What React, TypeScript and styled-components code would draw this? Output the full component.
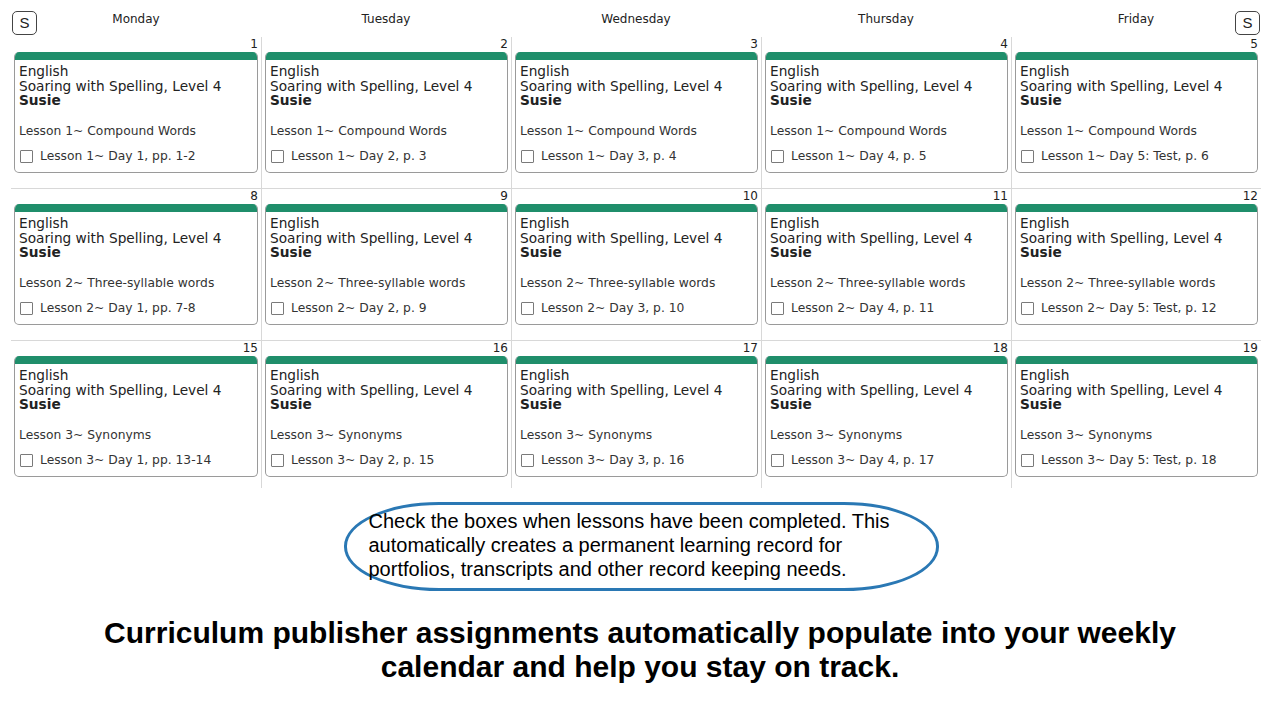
import React from "react";
import styled, { createGlobalStyle } from "styled-components";

const Global = createGlobalStyle`
  html, body { margin: 0; padding: 0; background: #fff; }
  body { font-family: "DejaVu Sans", Verdana, sans-serif; color: #222; }
`;

const Page = styled.div`
  width: 1280px;
  height: 720px;
  overflow: hidden;
  display: flex;
  flex-direction: column;
  align-items: flex-start;
`;

const Calendar = styled.div`
  position: relative;
  width: 1250px;
  margin-left: 11px;
`;

const Header = styled.div`
  display: grid;
  grid-template-columns: repeat(5, 1fr);
  height: 37px;
`;

const DayName = styled.div`
  text-align: center;
  font-size: 12px;
  line-height: 14px;
  padding-top: 12px;
  color: #222;
`;

const SideButton = styled.button<{ $side: "left" | "right" }>`
  position: absolute;
  top: 11px;
  ${(p) => (p.$side === "left" ? "left: 1px;" : "right: 1px;")}
  width: 25px;
  height: 24px;
  padding: 0;
  border: 1px solid #444;
  border-radius: 5px;
  background: #fff;
  font-family: "Liberation Sans", Arial, sans-serif;
  font-size: 15px;
  color: #222;
  line-height: 22px;
`;

const Week = styled.div<{ $first: boolean }>`
  display: grid;
  grid-template-columns: repeat(5, 1fr);
  border-top: ${(p) => (p.$first ? "none" : "1px solid #d8d8d8")};
`;

const Cell = styled.div<{ $first: boolean; $pb: number }>`
  border-left: ${(p) => (p.$first ? "none" : "1px solid #d8d8d8")};
  padding: 0 3px ${(p) => p.$pb}px 3px;
  display: flex;
  flex-direction: column;
`;

const DayNum = styled.div`
  text-align: right;
  font-size: 12px;
  line-height: 15px;
  height: 15px;
  color: #222;
`;

const Card = styled.div`
  border: 1px solid #9a9a9a;
  border-top: none;
  border-radius: 5px;
  overflow: hidden;
  background: #fff;
`;

const Bar = styled.div`
  height: 8px;
  background: #1f8e6b;
`;

const CardBody = styled.div`
  padding: 4px 4px 8.5px 4px;
`;

const Title = styled.div<{ $bold?: boolean }>`
  font-size: 13.7px;
  line-height: 14.5px;
  font-weight: ${(p) => (p.$bold ? 700 : 400)};
  color: #222;
  white-space: nowrap;
`;

const Lesson = styled.div`
  margin-top: 16px;
  font-size: 12.3px;
  line-height: 15px;
  color: #333;
  white-space: nowrap;
`;

const Task = styled.label`
  margin-top: 10px;
  display: flex;
  align-items: center;
  gap: 7px;
  font-size: 12.3px;
  line-height: 15px;
  color: #333;
  white-space: nowrap;
  padding-left: 1px;
`;

const Box = styled.span`
  width: 11px;
  height: 11px;
  border: 1px solid #7a7a7a;
  border-radius: 1px;
  background: #fff;
  flex: none;
`;

const Callout = styled.div`
  align-self: center;
  margin-top: 14px;
  margin-left: 2px;
  width: 595px;
  height: 89px;
  box-sizing: border-box;
  border: 3px solid #2a78b4;
  border-radius: 95px / 44px;
  padding: 4px 0 0 22px;
  font-family: "Liberation Sans", Arial, sans-serif;
  font-size: 20px;
  line-height: 24px;
  color: #000;
`;

const CalloutText = styled.p`
  margin: 0;
  width: 530px;
`;

const Headline = styled.div`
  align-self: center;
  margin-top: 25px;
  width: 1240px;
  text-align: center;
  font-family: "Liberation Sans", Arial, sans-serif;
  font-weight: 700;
  font-size: 30px;
  line-height: 34px;
  color: #000;
`;

const days = ["Monday", "Tuesday", "Wednesday", "Thursday", "Friday"];

const weeks = [
  {
    lesson: "Lesson 1~ Compound Words",
    dates: [1, 2, 3, 4, 5],
    tasks: [
      "Lesson 1~ Day 1, pp. 1-2",
      "Lesson 1~ Day 2, p. 3",
      "Lesson 1~ Day 3, p. 4",
      "Lesson 1~ Day 4, p. 5",
      "Lesson 1~ Day 5: Test, p. 6",
    ],
  },
  {
    lesson: "Lesson 2~ Three-syllable words",
    dates: [8, 9, 10, 11, 12],
    tasks: [
      "Lesson 2~ Day 1, pp. 7-8",
      "Lesson 2~ Day 2, p. 9",
      "Lesson 2~ Day 3, p. 10",
      "Lesson 2~ Day 4, p. 11",
      "Lesson 2~ Day 5: Test, p. 12",
    ],
  },
  {
    lesson: "Lesson 3~ Synonyms",
    dates: [15, 16, 17, 18, 19],
    tasks: [
      "Lesson 3~ Day 1, pp. 13-14",
      "Lesson 3~ Day 2, p. 15",
      "Lesson 3~ Day 3, p. 16",
      "Lesson 3~ Day 4, p. 17",
      "Lesson 3~ Day 5: Test, p. 18",
    ],
  },
];

export default function App() {
  return (
    <>
      <Global />
      <Page>
        <Calendar>
          <SideButton $side="left">S</SideButton>
          <SideButton $side="right">S</SideButton>
          <Header>
            {days.map((d) => (
              <DayName key={d}>{d}</DayName>
            ))}
          </Header>
          {weeks.map((w, wi) => (
            <Week key={wi} $first={wi === 0}>
              {w.dates.map((date, di) => (
                <Cell key={date} $first={di === 0} $pb={wi === weeks.length - 1 ? 11 : 15}>
                  <DayNum>{date}</DayNum>
                  <Card>
                    <Bar />
                    <CardBody>
                      <Title>English</Title>
                      <Title>Soaring with Spelling, Level 4</Title>
                      <Title $bold>Susie</Title>
                      <Lesson>{w.lesson}</Lesson>
                      <Task>
                        <Box />
                        {w.tasks[di]}
                      </Task>
                    </CardBody>
                  </Card>
                </Cell>
              ))}
            </Week>
          ))}
        </Calendar>
        <Callout>
          <CalloutText>
            Check the boxes when lessons have been completed. This automatically creates a permanent learning record for portfolios, transcripts and other record keeping needs.
          </CalloutText>
        </Callout>
        <Headline>
          Curriculum publisher assignments automatically populate into your weekly
          <br />
          calendar and help you stay on track.
        </Headline>
      </Page>
    </>
  );
}
